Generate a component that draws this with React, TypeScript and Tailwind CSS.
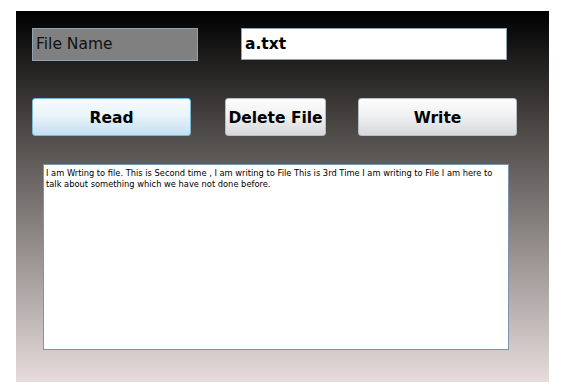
export default function App() {
  const font = "font-['DejaVu_Sans',sans-serif]";
  return (
    <div className="w-[562px] h-[389px] bg-white overflow-hidden">
      <div
        className={`ml-[16px] mt-[11px] w-[533px] h-[371px] pl-[16px] pt-[17px] bg-[linear-gradient(to_bottom,#000000,#5a5654_38%,#e6dcdc)] ${font}`}
      >
        <div className="flex items-start">
          <div className="w-[166px] h-[33px] bg-[#808080] border border-[#8ea3b3] flex items-center pl-[3px] pt-[1px] text-[15.5px] text-[#111]">
            File Name
          </div>
          <div className="ml-[43px] w-[266px] h-[32px] bg-white border border-[#8ea3b3] flex items-center pl-[3px] pt-[1px] text-[15.5px] font-bold text-black">
            a.txt
          </div>
        </div>

        <div className="flex mt-[37px]">
          <button className="w-[159px] h-[38px] pt-[3px] rounded-[3px] border border-[#7ab9d4] bg-[linear-gradient(to_bottom,#f7fbfd,#eaf4fa_45%,#c3dff0)] text-[15.5px] font-bold text-black">
            Read
          </button>
          <button className="ml-[34px] w-[101px] h-[38px] pt-[3px] rounded-[3px] border border-[#b8bcc0] bg-[linear-gradient(to_bottom,#fdfdfd,#f0f1f2_45%,#d6d8db)] text-[15.5px] font-bold text-black whitespace-nowrap">
            Delete File
          </button>
          <button className="ml-[32px] w-[159px] h-[38px] pt-[3px] rounded-[3px] border border-[#b8bcc0] bg-[linear-gradient(to_bottom,#fdfdfd,#f0f1f2_45%,#d6d8db)] text-[15.5px] font-bold text-black">
            Write
          </button>
        </div>

        <div className="ml-[11px] mt-[28px] w-[466px] h-[186px] bg-white border border-[#7d93a6] px-[2px] pt-[3px] text-[8.3px] leading-[11px] text-black">
          I am Wrting to file. This is Second time , I am writing to File This is 3rd Time I am writing to File I am here to talk about something which we have not done before.
        </div>
      </div>
    </div>
  );
}
